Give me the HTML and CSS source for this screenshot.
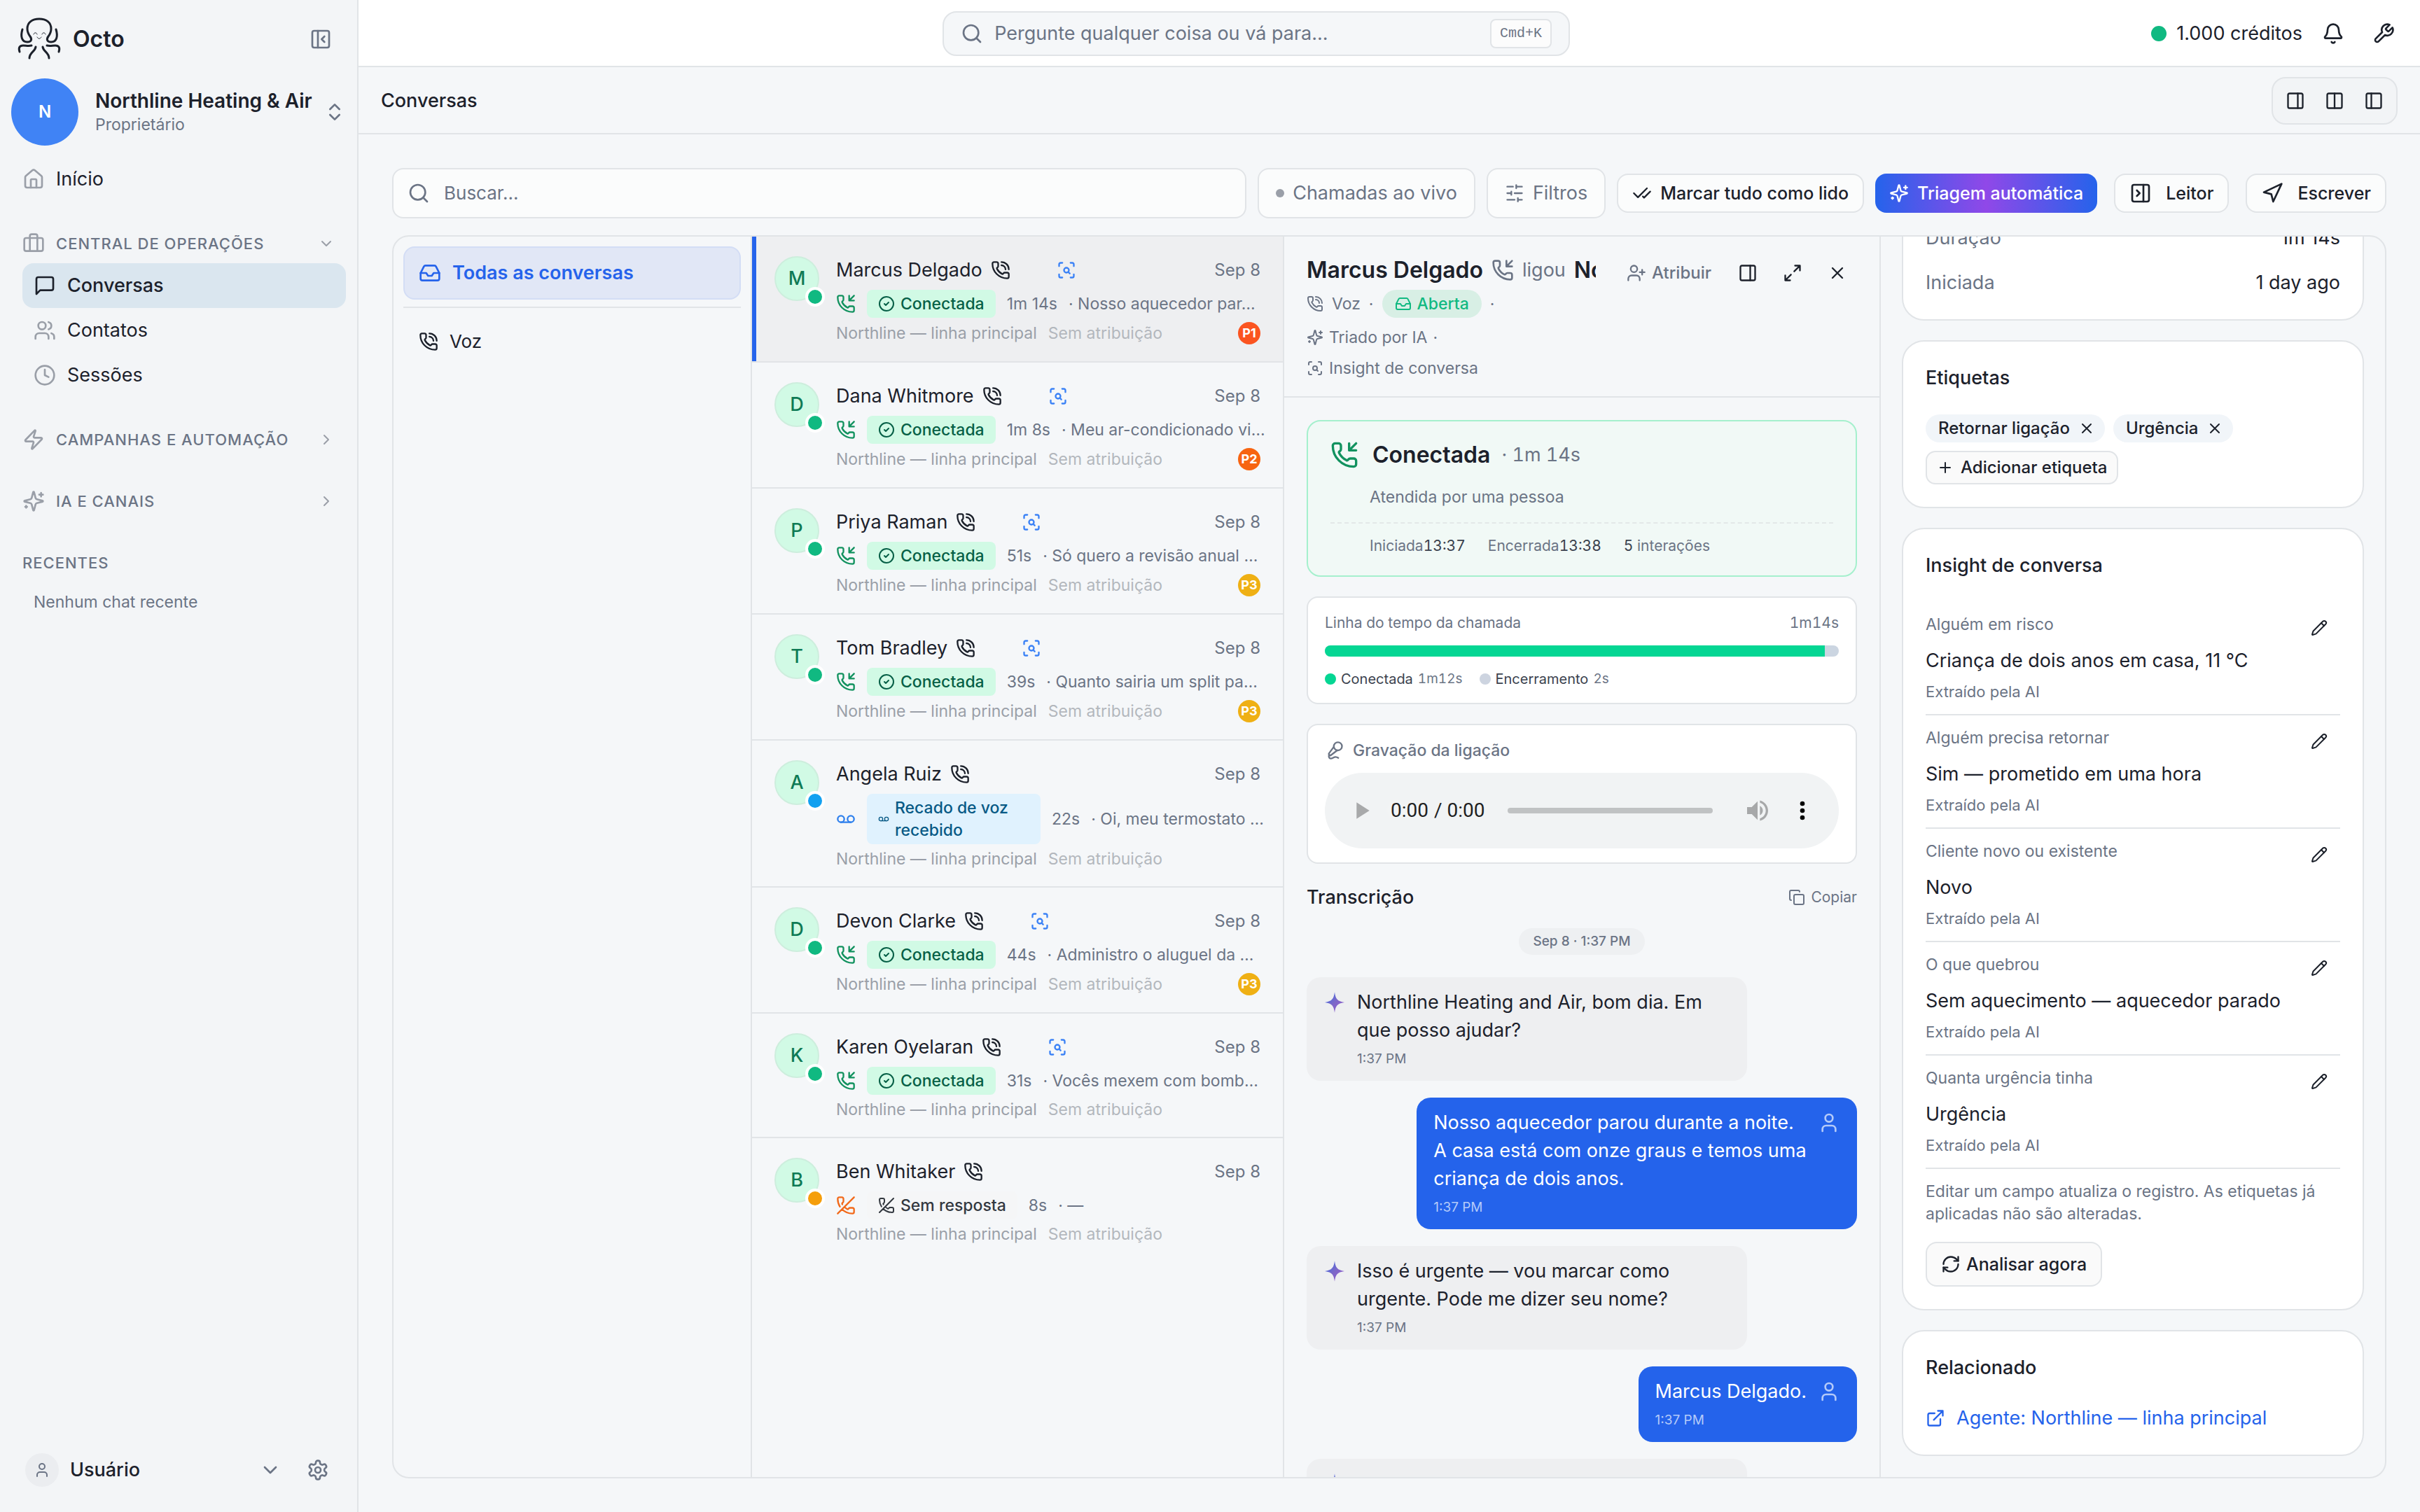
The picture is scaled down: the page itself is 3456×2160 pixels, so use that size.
FILE: index.html
```html
<!DOCTYPE html>
<html lang="pt-BR">
<head>
<meta charset="utf-8">
<meta name="viewport" content="width=device-width, initial-scale=1">
<title>Octo – Conversas</title>
<link rel="stylesheet" href="styles.css">
</head>
<body>
<svg class="sprite" aria-hidden="true">
  <defs>
    <linearGradient id="ai-gradient" x1="0" y1="0" x2="1" y2="1"><stop offset="0" stop-color="#2f6bea"/><stop offset=".5" stop-color="#7c68c8"/><stop offset="1" stop-color="#9b5bd0"/></linearGradient>
    <symbol id="i-phone-call" viewBox="0 0 24 24"><path d="M13 2a9 9 0 0 1 9 9M13 6a5 5 0 0 1 5 5"/><path d="M13.832 16.568a1 1 0 0 0 1.213-.303l.355-.465A2 2 0 0 1 17 15h3a2 2 0 0 1 2 2v3a2 2 0 0 1-2 2A18 18 0 0 1 2 4a2 2 0 0 1 2-2h3a2 2 0 0 1 2 2v3a2 2 0 0 1-.8 1.6l-.468.351a1 1 0 0 0-.292 1.233 14 14 0 0 0 6.392 6.384"/></symbol>
    <symbol id="i-phone-in" viewBox="0 0 24 24"><path d="M16 2v6h6M22 2l-6 6"/><path d="M13.832 16.568a1 1 0 0 0 1.213-.303l.355-.465A2 2 0 0 1 17 15h3a2 2 0 0 1 2 2v3a2 2 0 0 1-2 2A18 18 0 0 1 2 4a2 2 0 0 1 2-2h3a2 2 0 0 1 2 2v3a2 2 0 0 1-.8 1.6l-.468.351a1 1 0 0 0-.292 1.233 14 14 0 0 0 6.392 6.384"/></symbol>
    <symbol id="i-phone-off" viewBox="0 0 24 24"><path d="M10.1 13.9a14 14 0 0 0 3.732 2.668 1 1 0 0 0 1.213-.303l.355-.465A2 2 0 0 1 17 15h3a2 2 0 0 1 2 2v3a2 2 0 0 1-2 2 18 18 0 0 1-12.728-5.272M22 2 2 22M4.76 13.582A18 18 0 0 1 2 4a2 2 0 0 1 2-2h3a2 2 0 0 1 2 2v3a2 2 0 0 1-.8 1.6l-.468.351a1 1 0 0 0-.292 1.233 14 14 0 0 0 .244.473"/></symbol>
    <symbol id="i-scan" viewBox="0 0 24 24"><path d="M3 7V5a2 2 0 0 1 2-2h2M17 3h2a2 2 0 0 1 2 2v2M21 17v2a2 2 0 0 1-2 2h-2M7 21H5a2 2 0 0 1-2-2v-2"/><circle cx="12" cy="12" r="3"/><path d="m16 16-1.900-1.900"/></symbol>
    <symbol id="i-voicemail" viewBox="0 0 24 24"><circle cx="6" cy="12" r="4"/><circle cx="18" cy="12" r="4"/><path d="M6 16h12"/></symbol>
    <symbol id="i-inbox" viewBox="0 0 24 24"><path d="M22 12h-6l-2 3h-4l-2-3H2"/><path d="M5.450 5.110 2 12v6a2 2 0 0 0 2 2h16a2 2 0 0 0 2-2v-6l-3.450-6.890A2 2 0 0 0 16.760 4H7.240a2 2 0 0 0-1.790 1.110z"/></symbol>
    <symbol id="i-mic" viewBox="0 0 24 24"><path d="m11 7.601-5.994 8.190a1 1 0 0 0 .1 1.298l.817.818a1 1 0 0 0 1.314.087L15.090 12"/><path d="M16.500 21.174C15.500 20.500 14.372 20 13 20c-2.058 0-3.928 2.356-6 2-2.072-.356-2.775-3.369-1.500-4.500"/><circle cx="16" cy="7" r="5"/></symbol>
    <symbol id="i-sparkles" viewBox="0 0 24 24"><path d="M9.937 15.500A2 2 0 0 0 8.500 14.063l-6.135-1.582a.5.5 0 0 1 0-.962L8.500 9.936A2 2 0 0 0 9.937 8.500l1.582-6.135a.5.5 0 0 1 .963 0L14.063 8.500A2 2 0 0 0 15.500 9.937l6.135 1.581a.5.5 0 0 1 0 .964L15.500 14.063a2 2 0 0 0-1.437 1.437l-1.582 6.135a.5.5 0 0 1-.963 0z"/><path d="M20 3v4M22 5h-4M4 17v2M5 18H3"/></symbol>
    <symbol id="i-refresh" viewBox="0 0 24 24"><path d="M3 12a9 9 0 0 1 9-9 9.750 9.750 0 0 1 6.740 2.740L21 8"/><path d="M21 3v5h-5M21 12a9 9 0 0 1-9 9 9.750 9.750 0 0 1-6.740-2.740L3 16"/><path d="M8 16H3v5"/></symbol>
    <symbol id="i-external" viewBox="0 0 24 24"><path d="M15 3h6v6M10 14 21 3M18 13v6a2 2 0 0 1-2 2H5a2 2 0 0 1-2-2V8a2 2 0 0 1 2-2h6"/></symbol>
    <symbol id="i-gear" viewBox="0 0 24 24"><path d="M12.220 2h-.44a2 2 0 0 0-2 2v.18a2 2 0 0 1-1 1.730l-.43.25a2 2 0 0 1-2 0l-.15-.08a2 2 0 0 0-2.730.73l-.22.38a2 2 0 0 0 .73 2.730l.15.1a2 2 0 0 1 1 1.720v.51a2 2 0 0 1-1 1.740l-.15.09a2 2 0 0 0-.73 2.730l.22.38a2 2 0 0 0 2.730.73l.15-.08a2 2 0 0 1 2 0l.43.25a2 2 0 0 1 1 1.730V20a2 2 0 0 0 2 2h.44a2 2 0 0 0 2-2v-.18a2 2 0 0 1 1-1.730l.43-.25a2 2 0 0 1 2 0l.15.08a2 2 0 0 0 2.730-.73l.22-.39a2 2 0 0 0-.73-2.730l-.15-.08a2 2 0 0 1-1-1.740v-.5a2 2 0 0 1 1-1.740l.15-.09a2 2 0 0 0 .73-2.730l-.22-.38a2 2 0 0 0-2.730-.73l-.15.08a2 2 0 0 1-2 0l-.43-.25a2 2 0 0 1-1-1.730V4a2 2 0 0 0-2-2z"/><circle cx="12" cy="12" r="3"/></symbol>
    <symbol id="i-briefcase" viewBox="0 0 24 24"><path d="M16 20V4a2 2 0 0 0-2-2h-4a2 2 0 0 0-2 2v16"/><rect width="20" height="14" x="2" y="6" rx="2"/></symbol>
    <symbol id="i-zap" viewBox="0 0 24 24"><path d="M4 14a1 1 0 0 1-.78-1.630l9.900-10.200a.5.5 0 0 1 .86.46l-1.920 6.020A1 1 0 0 0 13 10h7a1 1 0 0 1 .78 1.630l-9.900 10.200a.5.5 0 0 1-.86-.46l1.920-6.020A1 1 0 0 0 11 14z"/></symbol>
    <symbol id="i-message" viewBox="0 0 24 24"><path d="M21 15a2 2 0 0 1-2 2H7l-4 4V5a2 2 0 0 1 2-2h14a2 2 0 0 1 2 2z"/></symbol>
    <symbol id="i-users" viewBox="0 0 24 24"><path d="M16 21v-2a4 4 0 0 0-4-4H6a4 4 0 0 0-4 4v2"/><circle cx="9" cy="7" r="4"/><path d="M22 21v-2a4 4 0 0 0-3-3.870M16 3.130a4 4 0 0 1 0 7.750"/></symbol>
    <symbol id="i-user" viewBox="0 0 24 24"><path d="M19 21v-2a4 4 0 0 0-4-4H9a4 4 0 0 0-4 4v2"/><circle cx="12" cy="7" r="4"/></symbol>
    <symbol id="i-user-plus" viewBox="0 0 24 24"><path d="M16 21v-2a4 4 0 0 0-4-4H6a4 4 0 0 0-4 4v2"/><circle cx="9" cy="7" r="4"/><path d="M19 8v6M22 11h-6"/></symbol>
    <symbol id="i-clock" viewBox="0 0 24 24"><circle cx="12" cy="12" r="10"/><path d="M12 6v6l4 2"/></symbol>
    <symbol id="i-home" viewBox="0 0 24 24"><path d="M15 21v-8a1 1 0 0 0-1-1h-4a1 1 0 0 0-1 1v8"/><path d="M3 10a2 2 0 0 1 .709-1.528l7-5.999a2 2 0 0 1 2.582 0l7 5.999A2 2 0 0 1 21 10v9a2 2 0 0 1-2 2H5a2 2 0 0 1-2-2z"/></symbol>
    <symbol id="i-collapse" viewBox="0 0 24 24"><rect width="18" height="18" x="3" y="3" rx="2"/><path d="M9 3v18M16 15l-3-3 3-3"/></symbol>
    <symbol id="i-reader" viewBox="0 0 24 24"><rect width="18" height="18" x="3" y="3" rx="2"/><path d="M15 3v18M8 9l3 3-3 3"/></symbol>
    <symbol id="i-panel-right" viewBox="0 0 24 24"><rect width="18" height="18" x="3" y="3" rx="2"/><path d="M15 3v18"/></symbol>
    <symbol id="i-columns" viewBox="0 0 24 24"><rect width="18" height="18" x="3" y="3" rx="2"/><path d="M12 3v18"/></symbol>
    <symbol id="i-panel-left" viewBox="0 0 24 24"><rect width="18" height="18" x="3" y="3" rx="2"/><path d="M9 3v18"/></symbol>
    <symbol id="i-updown" viewBox="0 0 24 24"><path d="m7 15 5 5 5-5M7 9l5-5 5 5"/></symbol>
    <symbol id="i-down" viewBox="0 0 24 24"><path d="m6 9 6 6 6-6"/></symbol>
    <symbol id="i-right" viewBox="0 0 24 24"><path d="m9 18 6-6-6-6"/></symbol>
    <symbol id="i-search" viewBox="0 0 24 24"><circle cx="11" cy="11" r="8"/><path d="m21 21-4.300-4.300"/></symbol>
    <symbol id="i-bell" viewBox="0 0 24 24"><path d="M10.268 21a2 2 0 0 0 3.464 0"/><path d="M3.262 15.326A1 1 0 0 0 4 17h16a1 1 0 0 0 .74-1.673C19.410 13.956 18 12.499 18 8A6 6 0 0 0 6 8c0 4.499-1.411 5.956-2.738 7.326"/></symbol>
    <symbol id="i-wrench" viewBox="0 0 24 24"><path d="M14.700 6.300a1 1 0 0 0 0 1.400l1.600 1.600a1 1 0 0 0 1.400 0l3.770-3.770a6 6 0 0 1-7.940 7.940l-6.910 6.910a2.120 2.120 0 0 1-3-3l6.910-6.910a6 6 0 0 1 7.940-7.940l-3.760 3.760z"/></symbol>
    <symbol id="i-checks" viewBox="0 0 24 24"><path d="M18 6 7 17l-5-5M22 10l-7.500 7.500L13 16"/></symbol>
    <symbol id="i-send" viewBox="0 0 24 24"><path d="M3 11 22 2l-9 19-2-8z"/></symbol>
    <symbol id="i-sliders" viewBox="0 0 24 24"><path d="M21 4h-7M10 4H3M21 12h-9M8 12H3M21 20h-5M12 20H3M14 2v4M8 10v4M16 18v4"/></symbol>
    <symbol id="i-expand" viewBox="0 0 24 24"><path d="M15 3h6v6M21 3l-7 7M3 21l7-7M9 21H3v-6"/></symbol>
    <symbol id="i-x" viewBox="0 0 24 24"><path d="M18 6 6 18M6 6l12 12"/></symbol>
    <symbol id="i-plus" viewBox="0 0 24 24"><path d="M5 12h14M12 5v14"/></symbol>
    <symbol id="i-copy" viewBox="0 0 24 24"><rect width="14" height="14" x="8" y="8" rx="2"/><path d="M4 16c-1.100 0-2-.9-2-2V4c0-1.100.9-2 2-2h10c1.100 0 2 .9 2 2"/></symbol>
    <symbol id="i-pencil" viewBox="0 0 24 24"><path d="M21.174 6.812a1 1 0 0 0-3.986-3.987L3.842 16.174a2 2 0 0 0-.5.83l-1.321 4.352a.5.5 0 0 0 .623.622l4.353-1.320a2 2 0 0 0 .83-.497z"/><path d="m15 5 4 4"/></symbol>
    <symbol id="i-check" viewBox="0 0 24 24"><circle cx="12" cy="12" r="10"/><path d="m9 12 2 2 4-4"/></symbol>
    <symbol id="i-star" viewBox="0 0 24 24"><path fill="url(#ai-gradient)" stroke="none" d="M12 1c.9 7 2.800 10 10.500 11-7.700 1-9.600 4-10.500 11-.9-7-2.800-10-10.500-11 7.700-1 9.600-4 10.500-11z"/></symbol>
    <symbol id="i-octo" viewBox="0 0 64 64"><path d="M8 18c-3 10-1 18 7 18 6 0 7-4 4-8-3-4-4-7-4-11C15 8 22 3 32 3s17 5 17 14c0 4-1 7-4 11-3 4-2 8 4 8 8 0 10-8 7-18"/><path d="M4 50c-2-6 0-9 5-9 4 0 8 1 12 0M60 50c2-6 0-9-5-9-4 0-8 1-12 0M27 43c-1 7-9 8-9 16M37 43c1 7 9 8 9 16"/><path stroke-width="1" d="M24 25c1-3 4-3 5 0M36 25c1-3 4-3 5 0M29 29c2 3 4 3 6 0"/></symbol>
  </defs>
</svg>

<div class="app">
  <aside class="sidebar">
    <div class="brand">
      <svg class="icon logo"><use href="#i-octo"/></svg>
      <strong class="brand-name">Octo</strong>
      <button class="bare muted" type="button" aria-label="Recolher menu"><svg class="icon i32"><use href="#i-collapse"/></svg></button>
    </div>
    <button class="workspace" type="button">
      <span class="workspace-avatar">N</span>
      <span class="workspace-text"><span class="workspace-name">Northline Heating &amp; Air</span><span class="workspace-role">Proprietário</span></span>
      <svg class="icon i32 muted"><use href="#i-updown"/></svg>
    </button>
    <nav class="nav">
      <a class="nav-item" href="#inicio"><svg class="icon i32"><use href="#i-home"/></svg>Início</a>
      <button class="nav-group" type="button"><svg class="icon i32"><use href="#i-briefcase"/></svg><span>CENTRAL DE OPERAÇÕES</span><svg class="icon i24"><use href="#i-down"/></svg></button>
      <a class="nav-item sub active" href="#conversas"><svg class="icon i32"><use href="#i-message"/></svg>Conversas</a>
      <a class="nav-item sub" href="#contatos"><svg class="icon i32"><use href="#i-users"/></svg>Contatos</a>
      <a class="nav-item sub" href="#sessoes"><svg class="icon i32"><use href="#i-clock"/></svg>Sessões</a>
      <button class="nav-group" type="button"><svg class="icon i32"><use href="#i-zap"/></svg><span>CAMPANHAS E AUTOMAÇÃO</span><svg class="icon i24"><use href="#i-right"/></svg></button>
      <button class="nav-group" type="button"><svg class="icon i32"><use href="#i-sparkles"/></svg><span>IA E CANAIS</span><svg class="icon i24"><use href="#i-right"/></svg></button>
      <h2 class="nav-title">RECENTES</h2>
      <p class="nav-empty">Nenhum chat recente</p>
    </nav>
    <div class="account">
      <span class="account-avatar"><svg class="icon i24"><use href="#i-user"/></svg></span>
      <span class="account-name">Usuário</span>
      <button class="bare muted" type="button" aria-label="Abrir conta"><svg class="icon i32"><use href="#i-down"/></svg></button>
      <button class="bare muted" type="button" aria-label="Configurações"><svg class="icon i32"><use href="#i-gear"/></svg></button>
    </div>
  </aside>

  <div class="main">
    <header class="topbar">
      <div class="topbar-center">
        <label class="command"><svg class="icon i32"><use href="#i-search"/></svg><input type="search" aria-label="Busca global" placeholder="Pergunte qualquer coisa ou vá para..."><kbd>Cmd+K</kbd></label>
      </div>
      <div class="topbar-right">
        <span class="credits"><span class="credits-dot"></span>1.000 créditos</span>
        <button class="bare" type="button" aria-label="Notificações"><svg class="icon i32"><use href="#i-bell"/></svg></button>
        <button class="bare" type="button" aria-label="Ferramentas"><svg class="icon i32"><use href="#i-wrench"/></svg></button>
      </div>
    </header>
    <div class="pagebar">
      <h1>Conversas</h1>
      <div class="layouts">
        <button class="bare" type="button" aria-label="Painel à direita"><svg class="icon i28"><use href="#i-panel-right"/></svg></button>
        <button class="bare" type="button" aria-label="Duas colunas"><svg class="icon i28"><use href="#i-columns"/></svg></button>
        <button class="bare" type="button" aria-label="Painel à esquerda"><svg class="icon i28"><use href="#i-panel-left"/></svg></button>
      </div>
    </div>

    <main class="content">
      <div class="toolbar">
        <label class="search"><svg class="icon i32"><use href="#i-search"/></svg><input type="search" aria-label="Buscar conversas" placeholder="Buscar..."></label>
        <button class="btn tall" type="button"><span class="live-dot"></span>Chamadas ao vivo</button>
        <button class="btn tall" type="button"><svg class="icon i28"><use href="#i-sliders"/></svg>Filtros</button>
        <button class="btn" type="button"><svg class="icon i28"><use href="#i-checks"/></svg>Marcar tudo como lido</button>
        <button class="btn triage" type="button"><svg class="icon i28"><use href="#i-sparkles"/></svg>Triagem automática</button>
        <button class="btn wide" type="button"><svg class="icon i32"><use href="#i-reader"/></svg>Leitor</button>
        <button class="btn wide" type="button"><svg class="icon i32"><use href="#i-send"/></svg>Escrever</button>
      </div>

      <div class="board">
        <nav class="folders">
          <a class="folder active" href="#todas"><svg class="icon i32"><use href="#i-inbox"/></svg>Todas as conversas</a>
          <hr>
          <a class="folder" href="#voz"><svg class="icon i28"><use href="#i-phone-call"/></svg>Voz</a>
        </nav>

        <section class="threads" aria-label="Lista de conversas">
          <article class="thread selected">
            <span class="avatar">M<i class="presence green"></i></span>
            <div class="thread-body">
              <div class="line name-line"><span class="name">Marcus Delgado</span><svg class="icon i28"><use href="#i-phone-call"/></svg><svg class="icon i28 scan"><use href="#i-scan"/></svg><time>Sep 8</time></div>
              <div class="line call-line"><svg class="icon i28 c-green"><use href="#i-phone-in"/></svg><span class="badge ok"><svg class="icon i24"><use href="#i-check"/></svg>Conectada</span><span class="dur">1m 14s</span><span class="preview">· Nosso aquecedor par…</span></div>
              <div class="line meta-line"><span>Northline — linha principal</span><span class="unassigned">Sem atribuição</span><b class="prio p1">P1</b></div>
            </div>
          </article>
          <article class="thread">
            <span class="avatar">D<i class="presence green"></i></span>
            <div class="thread-body">
              <div class="line name-line"><span class="name">Dana Whitmore</span><svg class="icon i28"><use href="#i-phone-call"/></svg><svg class="icon i28 scan"><use href="#i-scan"/></svg><time>Sep 8</time></div>
              <div class="line call-line"><svg class="icon i28 c-green"><use href="#i-phone-in"/></svg><span class="badge ok"><svg class="icon i24"><use href="#i-check"/></svg>Conectada</span><span class="dur">1m 8s</span><span class="preview">· Meu ar-condicionado vi…</span></div>
              <div class="line meta-line"><span>Northline — linha principal</span><span class="unassigned">Sem atribuição</span><b class="prio p2">P2</b></div>
            </div>
          </article>
          <article class="thread">
            <span class="avatar">P<i class="presence green"></i></span>
            <div class="thread-body">
              <div class="line name-line"><span class="name">Priya Raman</span><svg class="icon i28"><use href="#i-phone-call"/></svg><svg class="icon i28 scan"><use href="#i-scan"/></svg><time>Sep 8</time></div>
              <div class="line call-line"><svg class="icon i28 c-green"><use href="#i-phone-in"/></svg><span class="badge ok"><svg class="icon i24"><use href="#i-check"/></svg>Conectada</span><span class="dur">51s</span><span class="preview">· Só quero a revisão anual …</span></div>
              <div class="line meta-line"><span>Northline — linha principal</span><span class="unassigned">Sem atribuição</span><b class="prio p3">P3</b></div>
            </div>
          </article>
          <article class="thread">
            <span class="avatar">T<i class="presence green"></i></span>
            <div class="thread-body">
              <div class="line name-line"><span class="name">Tom Bradley</span><svg class="icon i28"><use href="#i-phone-call"/></svg><svg class="icon i28 scan"><use href="#i-scan"/></svg><time>Sep 8</time></div>
              <div class="line call-line"><svg class="icon i28 c-green"><use href="#i-phone-in"/></svg><span class="badge ok"><svg class="icon i24"><use href="#i-check"/></svg>Conectada</span><span class="dur">39s</span><span class="preview">· Quanto sairia um split pa…</span></div>
              <div class="line meta-line"><span>Northline — linha principal</span><span class="unassigned">Sem atribuição</span><b class="prio p3">P3</b></div>
            </div>
          </article>
          <article class="thread">
            <span class="avatar">A<i class="presence blue"></i></span>
            <div class="thread-body">
              <div class="line name-line"><span class="name">Angela Ruiz</span><svg class="icon i28"><use href="#i-phone-call"/></svg><time>Sep 8</time></div>
              <div class="line call-line"><svg class="icon i28 c-blue"><use href="#i-voicemail"/></svg><span class="badge voicemail"><svg class="icon i16"><use href="#i-voicemail"/></svg><span>Recado de voz recebido</span></span><span class="dur">22s</span><span class="preview">· Oi, meu termostato …</span></div>
              <div class="line meta-line"><span>Northline — linha principal</span><span class="unassigned">Sem atribuição</span></div>
            </div>
          </article>
          <article class="thread">
            <span class="avatar">D<i class="presence green"></i></span>
            <div class="thread-body">
              <div class="line name-line"><span class="name">Devon Clarke</span><svg class="icon i28"><use href="#i-phone-call"/></svg><svg class="icon i28 scan"><use href="#i-scan"/></svg><time>Sep 8</time></div>
              <div class="line call-line"><svg class="icon i28 c-green"><use href="#i-phone-in"/></svg><span class="badge ok"><svg class="icon i24"><use href="#i-check"/></svg>Conectada</span><span class="dur">44s</span><span class="preview">· Administro o aluguel da …</span></div>
              <div class="line meta-line"><span>Northline — linha principal</span><span class="unassigned">Sem atribuição</span><b class="prio p3">P3</b></div>
            </div>
          </article>
          <article class="thread">
            <span class="avatar">K<i class="presence green"></i></span>
            <div class="thread-body">
              <div class="line name-line"><span class="name">Karen Oyelaran</span><svg class="icon i28"><use href="#i-phone-call"/></svg><svg class="icon i28 scan"><use href="#i-scan"/></svg><time>Sep 8</time></div>
              <div class="line call-line"><svg class="icon i28 c-green"><use href="#i-phone-in"/></svg><span class="badge ok"><svg class="icon i24"><use href="#i-check"/></svg>Conectada</span><span class="dur">31s</span><span class="preview">· Vocês mexem com bomb…</span></div>
              <div class="line meta-line"><span>Northline — linha principal</span><span class="unassigned">Sem atribuição</span></div>
            </div>
          </article>
          <article class="thread">
            <span class="avatar">B<i class="presence orange"></i></span>
            <div class="thread-body">
              <div class="line name-line"><span class="name">Ben Whitaker</span><svg class="icon i28"><use href="#i-phone-call"/></svg><time>Sep 8</time></div>
              <div class="line call-line"><svg class="icon i28 c-orange"><use href="#i-phone-off"/></svg><span class="badge missed"><svg class="icon i24"><use href="#i-phone-off"/></svg>Sem resposta</span><span class="dur">8s</span><span class="preview">· —</span></div>
              <div class="line meta-line"><span>Northline — linha principal</span><span class="unassigned">Sem atribuição</span></div>
            </div>
          </article>
        </section>

        <section class="detail" aria-label="Conversa">
          <header class="detail-head">
            <div class="detail-main">
              <h2 class="detail-title"><span>Marcus Delgado</span><svg class="icon i32"><use href="#i-phone-in"/></svg><span class="called">ligou</span><span class="callee">Northline</span></h2>
              <div class="facts">
                <span class="fact"><svg class="icon i24"><use href="#i-phone-call"/></svg>Voz</span><span>·</span>
                <span class="status"><svg class="icon i24"><use href="#i-inbox"/></svg>Aberta</span><span>·</span>
              </div>
              <div class="fact"><svg class="icon i24"><use href="#i-sparkles"/></svg>Triado por IA<span>·</span></div>
              <div class="fact"><svg class="icon i24"><use href="#i-scan"/></svg>Insight de conversa</div>
            </div>
            <div class="detail-actions">
              <button class="bare assign" type="button"><svg class="icon i28"><use href="#i-user-plus"/></svg>Atribuir</button>
              <button class="bare square" type="button" aria-label="Alternar painel"><svg class="icon i28"><use href="#i-panel-right"/></svg></button>
              <button class="bare square" type="button" aria-label="Expandir"><svg class="icon i28"><use href="#i-expand"/></svg></button>
              <button class="bare square" type="button" aria-label="Fechar"><svg class="icon i28"><use href="#i-x"/></svg></button>
            </div>
          </header>
          <div class="detail-body">
            <div class="outcome">
              <div class="outcome-top"><svg class="icon i40 c-green"><use href="#i-phone-in"/></svg><strong>Conectada</strong><span>· 1m 14s</span></div>
              <p class="outcome-sub">Atendida por uma pessoa</p>
              <div class="outcome-facts"><span>Iniciada<b>13:37</b></span><span>Encerrada<b>13:38</b></span><span><b>5</b> interações</span></div>
            </div>
            <div class="panel timeline">
              <div class="timeline-head"><span>Linha do tempo da chamada</span><span>1m14s</span></div>
              <div class="timeline-bar"><span class="seg-on" style="width:97.300%"></span></div>
              <div class="legend"><span><i class="key on"></i>Conectada<em>1m12s</em></span><span><i class="key off"></i>Encerramento<em>2s</em></span></div>
            </div>
            <div class="panel recording">
              <div class="recording-head"><svg class="icon i28"><use href="#i-mic"/></svg>Gravação da ligação</div>
              <audio class="player" controls aria-label="Gravação da ligação"></audio>
            </div>
            <div class="transcript-head"><h3>Transcrição</h3><button class="bare copy" type="button"><svg class="icon i24"><use href="#i-copy"/></svg>Copiar</button></div>
            <div class="day">Sep 8 · 1:37 PM</div>
            <div class="messages">
              <div class="msg ai"><svg class="icon i32"><use href="#i-star"/></svg><div><p>Northline Heating and Air, bom dia. Em que posso ajudar?</p><time>1:37 PM</time></div></div>
              <div class="msg user"><div><p>Nosso aquecedor parou durante a noite. A casa está com onze graus e temos uma criança de dois anos.</p><time>1:37 PM</time></div><svg class="icon i32"><use href="#i-user"/></svg></div>
              <div class="msg ai"><svg class="icon i32"><use href="#i-star"/></svg><div><p>Isso é urgente — vou marcar como urgente. Pode me dizer seu nome?</p><time>1:37 PM</time></div></div>
              <div class="msg user"><div><p>Marcus Delgado.</p><time>1:37 PM</time></div><svg class="icon i32"><use href="#i-user"/></svg></div>
              <div class="msg ai"><svg class="icon i32"><use href="#i-star"/></svg><div><p>&nbsp;</p></div></div>
            </div>
          </div>
        </section>

        <aside class="info" aria-label="Detalhes">
          <section class="card">
            <dl class="pairs"><div><dt>Duração</dt><dd>1m 14s</dd></div><div><dt>Iniciada</dt><dd>1 day ago</dd></div></dl>
          </section>
          <section class="card">
            <h3>Etiquetas</h3>
            <div class="tags">
              <span class="tag">Retornar ligação<button class="bare" type="button" aria-label="Remover Retornar ligação"><svg class="icon i24"><use href="#i-x"/></svg></button></span>
              <span class="tag">Urgência<button class="bare" type="button" aria-label="Remover Urgência"><svg class="icon i24"><use href="#i-x"/></svg></button></span>
              <button class="add-tag" type="button"><svg class="icon i24"><use href="#i-plus"/></svg>Adicionar etiqueta</button>
            </div>
          </section>
          <section class="card">
            <h3>Insight de conversa</h3>
            <div class="field"><div><span class="label">Alguém em risco</span><span class="value">Criança de dois anos em casa, 11 °C</span><span class="source">Extraído pela AI</span></div><button class="bare edit" type="button" aria-label="Editar"><svg class="icon i24"><use href="#i-pencil"/></svg></button></div>
            <div class="field"><div><span class="label">Alguém precisa retornar</span><span class="value">Sim — prometido em uma hora</span><span class="source">Extraído pela AI</span></div><button class="bare edit" type="button" aria-label="Editar"><svg class="icon i24"><use href="#i-pencil"/></svg></button></div>
            <div class="field"><div><span class="label">Cliente novo ou existente</span><span class="value">Novo</span><span class="source">Extraído pela AI</span></div><button class="bare edit" type="button" aria-label="Editar"><svg class="icon i24"><use href="#i-pencil"/></svg></button></div>
            <div class="field"><div><span class="label">O que quebrou</span><span class="value">Sem aquecimento — aquecedor parado</span><span class="source">Extraído pela AI</span></div><button class="bare edit" type="button" aria-label="Editar"><svg class="icon i24"><use href="#i-pencil"/></svg></button></div>
            <div class="field"><div><span class="label">Quanta urgência tinha</span><span class="value">Urgência</span><span class="source">Extraído pela AI</span></div><button class="bare edit" type="button" aria-label="Editar"><svg class="icon i24"><use href="#i-pencil"/></svg></button></div>
            <p class="note">Editar um campo atualiza o registro. As etiquetas já aplicadas não são alteradas.</p>
            <button class="analyze" type="button"><svg class="icon i28"><use href="#i-refresh"/></svg>Analisar agora</button>
          </section>
          <section class="card">
            <h3>Relacionado</h3>
            <a class="related" href="#agente"><svg class="icon i28"><use href="#i-external"/></svg>Agente: Northline — linha principal</a>
          </section>
        </aside>
      </div>
    </main>
  </div>
</div>
</body>
</html>
```
FILE: styles.css
```css
:root {
  --ink: #1c212b;
  --muted: #6b7485;
  --faint: #9a9fa8;
  --line: #e1e4e7;
  --bg: #f5f7f9;
  --blue: #2563eb;
  --green: #12925f;
}

* { box-sizing: border-box; margin: 0; }

body {
  background: var(--bg);
  color: var(--ink);
  font-family: Inter, "Liberation Sans", sans-serif;
  font-size: 27px;
  line-height: 40px;
}

a { color: inherit; text-decoration: none; }
button, input { font: inherit; color: inherit; }
button { cursor: pointer; }
input { flex: 1; min-width: 0; border: 0; outline: 0; padding: 0; background: none; }
input::placeholder { color: var(--muted); opacity: 1; }

.sprite { position: absolute; width: 0; height: 0; }
.icon { flex: none; fill: none; stroke: currentColor; stroke-width: 2; stroke-linecap: round; stroke-linejoin: round; }
.i16 { width: 16px; height: 16px; }
.i24 { width: 24px; height: 24px; }
.i28 { width: 28px; height: 28px; }
.i32 { width: 32px; height: 32px; }
.i40 { width: 40px; height: 40px; }
.c-green { color: var(--green); }
.c-blue { color: #2f80ed; }
.c-orange { color: #f26a1b; }
.muted { color: var(--muted); }
.bare { display: inline-flex; align-items: center; justify-content: center; border: 0; padding: 0; background: none; }
.bare.muted { color: var(--muted); }

.app { display: grid; grid-template-columns: 512px 1fr; height: 100vh; }

/* Sidebar */
.sidebar { display: flex; flex-direction: column; border-right: 2px solid var(--line); background: #f3f5f7; }
.brand { display: flex; align-items: center; height: 112px; padding: 0 36px 0 24px; gap: 16px; }
.logo { width: 64px; height: 64px; stroke-width: 3; }
.brand-name { flex: 1; font-size: 32px; font-weight: 600; }
.workspace { display: flex; align-items: center; gap: 12px; padding: 0 16px; border: 0; background: none; text-align: left; }
.workspace-avatar { display: grid; place-items: center; flex: none; width: 96px; height: 96px; margin-right: 12px; border-radius: 50%; background: #4083f5; color: #fff; font-size: 24px; font-weight: 600; }
.workspace-text { flex: 1; display: flex; flex-direction: column; min-width: 0; white-space: nowrap; }
.workspace-name { font-size: 28px; line-height: 36px; font-weight: 600; }
.workspace-role { font-size: 23px; line-height: 32px; color: var(--muted); }
.nav { display: flex; flex-direction: column; flex: 1; padding: 16px 16px 0; }
.nav-item { display: flex; align-items: center; gap: 16px; height: 64px; padding: 0 16px; border-radius: 16px; }
.nav-item .icon { color: var(--faint); }
.nav-item.sub { margin-left: 16px; }
.nav-item.active { background: #dae6ef; font-weight: 500; }
.nav-item.active .icon { color: var(--ink); }
.nav-group { display: flex; align-items: center; gap: 16px; height: 56px; margin-top: 32px; padding: 0 16px; border: 0; background: none; color: var(--muted); font-size: 22px; font-weight: 500; text-align: left; letter-spacing: 1px; white-space: nowrap; }
.nav-group span { flex: 1; }
.nav-group .icon { color: var(--faint); }
.nav-title { margin-top: 40px; padding-left: 16px; color: var(--muted); font-size: 22px; font-weight: 500; letter-spacing: 1px; }
.nav-empty { margin-top: 16px; padding-left: 32px; color: var(--muted); font-size: 23px; }
.account { display: flex; align-items: center; padding: 0 40px 36px 36px; gap: 16px; }
.account-avatar { display: grid; place-items: center; width: 48px; height: 48px; border-radius: 50%; background: #ebedf0; color: var(--muted); }
.account-name { flex: 1; font-weight: 500; }
.account .bare + .bare { margin-left: 20px; }

/* Top bars */
.main { display: flex; flex-direction: column; min-width: 0; min-height: 0; }
.topbar { display: flex; height: 96px; padding-top: 2px; border-bottom: 2px solid var(--line); background: #fff; }
.topbar-center { flex: 1; display: flex; align-items: center; justify-content: center; padding-left: 4px; }
.command { display: flex; align-items: center; gap: 16px; width: 896px; height: 64px; padding: 0 24px; border: 2px solid var(--line); border-radius: 20px; background: var(--bg); color: var(--muted); }
kbd { display: grid; place-items: center; height: 42px; padding: 0 12px; border: 2px solid var(--line); border-radius: 8px; background: #fcfcfc; font: 20px/36px "Liberation Mono", monospace; }
.topbar-right { display: flex; align-items: center; gap: 28px; padding: 0 36px 0 0; }
.credits { display: flex; align-items: center; gap: 14px; white-space: nowrap; }
.credits-dot { width: 22px; height: 22px; border-radius: 50%; background: #10b981; }
.topbar-right .bare + .bare { margin-left: 12px; }
.pagebar { display: flex; align-items: center; justify-content: space-between; height: 96px; padding: 2px 32px 0; border-bottom: 2px solid var(--line); }
h1 { font-size: 27px; font-weight: 500; }
.layouts { display: flex; align-items: center; gap: 28px; height: 68px; padding: 0 18px; border: 2px solid var(--line); border-radius: 20px; background: #f2f4f6; }

/* Toolbar */
.content { flex: 1; display: flex; flex-direction: column; gap: 24px; min-height: 0; padding: 48px; }
.toolbar { display: flex; align-items: center; gap: 16px; }
.search { flex: 1; display: flex; align-items: center; gap: 20px; height: 72px; padding: 0 20px; border: 2px solid var(--line); border-radius: 16px; background: #fbfcfc; color: var(--muted); }
.search input { font-size: 26px; }
.btn { display: flex; align-items: center; gap: 12px; height: 56px; padding: 0 20px; border: 2px solid var(--line); border-radius: 16px; background: #fbfcfc; font-size: 25px; font-weight: 500; white-space: nowrap; }
.btn.tall { height: 72px; padding: 0 24px; color: var(--muted); font-size: 27px; font-weight: 400; }
.btn.wide { margin-left: 8px; gap: 20px; }
.live-dot { width: 12px; height: 12px; border-radius: 50%; background: var(--faint); }
.btn.triage { border: 0; background: linear-gradient(90deg, #2563eb, #9048e8 50%, #2563eb); color: #fff; }

/* Board */
.board { flex: 1; display: grid; grid-template-columns: 512px 760px 1fr 720px; min-height: 0; border: 2px solid var(--line); border-radius: 24px; overflow: hidden; }
.folders { padding: 14px; border-right: 2px solid var(--line); }
.folder { display: flex; align-items: center; gap: 16px; height: 76px; padding: 0 20px; border: 2px solid transparent; border-radius: 16px; font-size: 26px; }
.folder.active { border-color: #d3ddf5; background: #e1e7f6; color: var(--blue); font-size: 27px; font-weight: 600; }
.folders hr { height: 2px; margin: 10px 0; border: 0; background: var(--line); }

.threads { border-right: 2px solid var(--line); overflow: hidden; }
.thread { display: flex; gap: 24px; padding: 28px 32px 24px; border-bottom: 2px solid var(--line); }
.thread:last-child { border-bottom: 0; }
.thread.selected { background: #eeeff1; box-shadow: inset 6px 0 0 var(--blue); }
.avatar { position: relative; display: grid; place-items: center; flex: none; width: 64px; height: 64px; border: 2px solid #cdeedd; border-radius: 50%; background: #d1fae5; color: #0f7a55; font-weight: 500; }
.presence { position: absolute; right: -10px; bottom: -10px; width: 28px; height: 28px; border: 4px solid #fff; border-radius: 50%; }
.green { background: #10b981; }
.blue { background: #12a0f0; }
.orange { background: #f59e0b; }
.thread-body { flex: 1; min-width: 0; }
.line { display: flex; align-items: center; white-space: nowrap; }
.name-line { gap: 12px; height: 40px; }
.name-line time { margin-left: auto; color: var(--muted); font-size: 24px; }
.scan { margin-left: 54px; color: #3b82f6; }
.call-line { gap: 16px; margin-top: 8px; color: var(--muted); font-size: 23px; line-height: 32px; }
.badge { display: flex; align-items: center; flex: none; gap: 8px; min-height: 40px; padding: 4px 16px; border-radius: 8px; font-weight: 500; }
.badge.ok { background: #d1fae5; color: #065f46; }
.badge.voicemail { width: 248px; background: #e0f2fe; color: #075985; white-space: normal; }
.badge.missed { background: #f5f6f7; color: #33383f; }
.preview { flex: 1; min-width: 0; }
.meta-line { gap: 16px; margin-top: 6px; color: var(--faint); font-size: 23px; line-height: 30px; }
.unassigned { color: #b3b7bd; }
.prio { display: grid; place-items: center; width: 32px; height: 32px; margin-left: auto; border-radius: 50%; color: #fff; font-size: 18px; line-height: 20px; font-weight: 700; }
.p1 { background: #fb5420; }
.p2 { background: #f76411; }
.p3 { background: #efb014; }

/* Conversation */
.detail { display: flex; flex-direction: column; min-width: 0; min-height: 0; border-right: 2px solid var(--line); overflow: hidden; }
.detail-head { display: flex; gap: 44px; padding: 28px 28px 18px 32px; border-bottom: 2px solid var(--line); }
.detail-main { flex: 1; min-width: 0; color: var(--muted); font-size: 23px; }
.detail-title { display: flex; align-items: center; gap: 12px; height: 40px; color: var(--ink); font-size: 32px; font-weight: 600; white-space: nowrap; }
.detail-title .icon, .called { color: var(--muted); }
.called { font-size: 27px; font-weight: 400; }
.callee { flex: 1; min-width: 0; overflow: hidden; }
.facts { display: flex; align-items: center; gap: 12px; margin-top: 8px; }
.fact { display: flex; align-items: center; gap: 8px; height: 44px; }
.facts .fact { height: 40px; gap: 12px; }
.facts + .fact { margin-top: 6px; }
.status { display: flex; align-items: center; gap: 8px; height: 40px; padding: 0 18px; border-radius: 20px; background: #d8efe5; color: #10b981; font-weight: 500; }
.detail-actions { display: flex; align-items: center; height: 48px; }
.assign { gap: 8px; margin-right: 20px; color: var(--muted); font-size: 24px; font-weight: 500; }
.square { width: 64px; height: 48px; }
.detail-body { display: flex; flex-direction: column; flex: 1; min-height: 0; padding: 32px 32px 0; overflow: hidden; }
.detail-body > * { flex: none; }
.outcome { padding: 28px 32px 22px; border: 2px solid #a5f0cd; border-radius: 20px; background: #f1f9f6; color: var(--muted); }
.outcome-top { display: flex; align-items: center; gap: 16px; height: 40px; font-size: 27px; font-variant-numeric: tabular-nums; }
.outcome-top .icon { margin-right: 4px; }
.outcome-top strong { color: var(--ink); font-size: 32px; font-weight: 600; }
.outcome-sub { margin: 20px 0 16px; padding-left: 56px; font-size: 23px; }
.outcome-facts { display: flex; gap: 32px; padding: 12px 0 0 56px; border-top: 2px dashed #e3e8e8; font-size: 21px; font-variant-numeric: tabular-nums; }
.outcome-facts b { color: #3b424e; font-weight: 400; }
.panel { border: 2px solid var(--line); border-radius: 16px; background: #fff; margin-top: 28px; padding: 20px 24px; }
.timeline { padding-bottom: 18px; font-variant-numeric: tabular-nums; }
.timeline-head { display: flex; justify-content: space-between; line-height: 32px; color: var(--muted); font-size: 21px; }
.timeline-bar { display: flex; height: 16px; margin: 16px 0; border-radius: 8px; background: #cbd5e1; overflow: hidden; }
.seg-on { background: #05d693; }
.legend { display: flex; gap: 24px; font-size: 20px; line-height: 32px; color: #3b424e; }
.legend span { display: flex; align-items: center; gap: 7px; }
.legend em { color: var(--muted); font-size: 19px; font-style: normal; }
.key { width: 16px; height: 16px; border-radius: 50%; }
.key.on { background: #05d693; }
.key.off { background: #cdd4e0; }
.recording { padding: 16px 24px 20px; }
.recording-head { display: flex; align-items: center; gap: 12px; color: var(--muted); font-size: 23px; font-weight: 500; }
.player { display: block; zoom: 2; width: 100%; height: 54px; margin-top: 6px; }
.transcript-head { display: flex; align-items: center; justify-content: space-between; margin-top: 28px; }
.transcript-head h3 { font-size: 27px; font-weight: 500; }
.copy { gap: 8px; color: var(--muted); font-size: 21px; }
.day { align-self: center; height: 38px; margin-top: 24px; padding: 0 20px; border-radius: 19px; background: #eef0f2; color: var(--muted); font-size: 19px; font-weight: 500; line-height: 38px; }
.messages { display: flex; flex-direction: column; align-items: flex-start; gap: 24px; margin-top: 32px; }
.msg { display: flex; gap: 16px; width: 80%; padding: 16px 24px; border-radius: 20px; }
.msg .icon { margin-top: 4px; }
.msg div { flex: 1; }
.msg time { display: block; margin-top: 6px; color: var(--muted); font-size: 19px; line-height: 30px; }
.msg.ai { background: #eeeff1; }
.msg.user { align-self: flex-end; width: auto; max-width: 80%; background: #2463eb; color: #fff; }
.msg.user time, .msg.user .icon { color: #b4caf9; }

/* Info column */
.info { display: flex; flex-direction: column; justify-content: flex-end; gap: 28px; min-height: 0; padding: 0 30px 30px; overflow: hidden; }
.card { flex: none; padding: 32px; border: 2px solid var(--line); border-radius: 32px; background: #fff; }
.card h3 { margin-bottom: 32px; font-size: 27px; font-weight: 500; line-height: 40px; }
.pairs { display: flex; flex-direction: column; gap: 24px; }
.pairs div { display: flex; justify-content: space-between; }
.pairs dt { color: var(--muted); }
.tags { display: flex; flex-wrap: wrap; gap: 12px; font-size: 24px; font-weight: 500; }
.tag { display: flex; align-items: center; gap: 12px; height: 40px; padding: 0 14px 0 18px; border-radius: 20px; background: #f1f5f9; }
.add-tag { display: flex; align-items: center; gap: 10px; height: 48px; padding: 0 14px; border: 2px solid var(--line); border-radius: 14px; background: #fafafa; }
.field { display: flex; padding: 16px 0; border-bottom: 2px solid var(--line); }
.field div { flex: 1; display: flex; flex-direction: column; min-width: 0; }
.label { color: var(--muted); font-size: 23px; line-height: 32px; }
.value { margin: 16px 0 8px; font-size: 27px; line-height: 40px; white-space: nowrap; }
.source { color: var(--muted); font-size: 22px; line-height: 32px; }
.edit { width: 60px; height: 42px; }
.note { margin: 16px 0 24px; color: var(--muted); font-size: 23px; line-height: 32px; }
.analyze { display: flex; align-items: center; gap: 8px; height: 64px; padding: 0 20px; border: 2px solid var(--line); border-radius: 16px; background: #fafafa; font-size: 25px; font-weight: 500; }
.related { display: flex; align-items: center; gap: 16px; color: var(--blue); white-space: nowrap; }
```
